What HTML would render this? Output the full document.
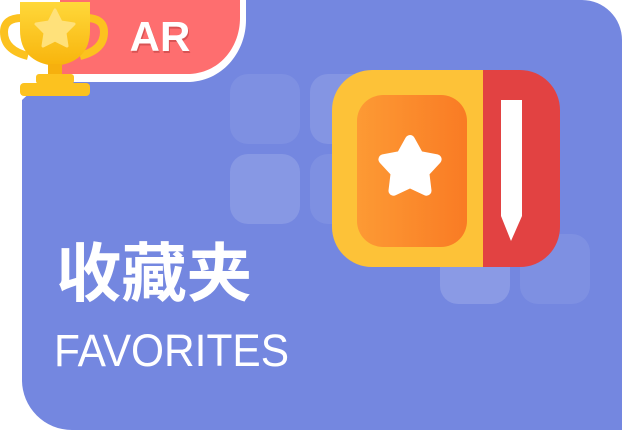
<!DOCTYPE html>
<html><head><meta charset="utf-8"><style>
html,body{margin:0;padding:0;background:#fff;width:622px;height:430px;overflow:hidden}
</style></head><body>
<svg width="622" height="430" viewBox="0 0 622 430" xmlns="http://www.w3.org/2000/svg">
<defs>
<linearGradient id="og" x1="0" x2="1" y1="0" y2="0"><stop offset="0" stop-color="#fd9a34"/><stop offset="1" stop-color="#f97b24"/></linearGradient>
<linearGradient id="gold" x1="0" x2="0" y1="0" y2="1"><stop offset="0" stop-color="#ffd83a"/><stop offset="1" stop-color="#f8b40c"/></linearGradient>
</defs>
<path d="M22 0 H582 A40 40 0 0 1 622 40 V430 H72 A50 50 0 0 1 22 380 Z" fill="#7487e0"/>
<g fill="#fff">
<rect x="230" y="74" width="70" height="70" rx="18" opacity="0.08"/>
<rect x="310" y="74" width="70" height="70" rx="18" opacity="0.12"/>
<rect x="230" y="154" width="70" height="70" rx="18" opacity="0.14"/>
<rect x="310" y="154" width="70" height="70" rx="18" opacity="0.08"/>
<rect x="440" y="234" width="70" height="70" rx="18" opacity="0.16"/>
<rect x="520" y="234" width="70" height="70" rx="18" opacity="0.08"/>
</g>
<path d="M22 0 H246 V20 C246 50 225 80 190 82 L70 82 Q40 82 22 100 Z" fill="#fff"/>
<path d="M60 0 H240 V18 C240 45 222 72 190 74 L60 74 Z" fill="#fe6e6f"/>
<text x="161" y="53" font-family="Liberation Sans, sans-serif" font-size="42" font-weight="bold" fill="#b33a3a" text-anchor="middle" opacity="0.5">AR</text>
<text x="160" y="51" font-family="Liberation Sans, sans-serif" font-size="42" font-weight="bold" fill="#fff" text-anchor="middle">AR</text>
<path d="M22 18 Q4 18 4 32 Q4 50 28 56" stroke="#fcc21f" stroke-width="8" fill="none"/>
<path d="M86 18 Q104 18 104 32 Q104 50 80 56" stroke="#fcc21f" stroke-width="8" fill="none"/>
<path d="M20 2 H90 V30 Q90 62 55 66 Q20 62 20 30 Z" fill="url(#gold)"/>
<rect x="48" y="64" width="14" height="12" fill="#f6b00e"/>
<rect x="36" y="74" width="38" height="10" rx="3" fill="#fcc21f"/>
<rect x="20" y="83" width="70" height="13" rx="4" fill="#fcc21f"/>
<path d="M55 10 l6 12 13 2 -9 9 2 13 -12 -6 -12 6 2 -13 -9 -9 13 -2 z" fill="#ffe17a" stroke="#ffe17a" stroke-width="3" stroke-linejoin="round"/>
<path d="M372 70 H483 V267 H372 A40 40 0 0 1 332 227 V110 A40 40 0 0 1 372 70 Z" fill="#fdc238"/>
<path d="M483 70 H520 A40 40 0 0 1 560 110 V227 A40 40 0 0 1 520 267 H483 Z" fill="#e24242"/>
<rect x="357" y="95" width="110" height="152" rx="26" fill="url(#og)"/>
<path d="M501 100 H522 V216 L511 241 L501 216 Z" fill="#fff"/>
<path d="M410 140 L418.8 155.9 L436.6 159.3 L424.3 172.6 L426.5 190.7 L410 183 L393.5 190.7 L395.7 172.6 L383.4 159.3 L401.2 155.9 Z" fill="#fff" stroke="#fff" stroke-width="10" stroke-linejoin="round"/>
<text x="56" y="296" font-family="Liberation Sans, Noto Sans CJK SC, sans-serif" font-size="64" font-weight="bold" fill="#fff" textLength="196" lengthAdjust="spacingAndGlyphs">收藏夹</text>
<text x="54" y="366" font-family="Liberation Sans, sans-serif" font-size="45" fill="#fff" textLength="235" lengthAdjust="spacingAndGlyphs">FAVORITES</text>
</svg>
</body></html>
